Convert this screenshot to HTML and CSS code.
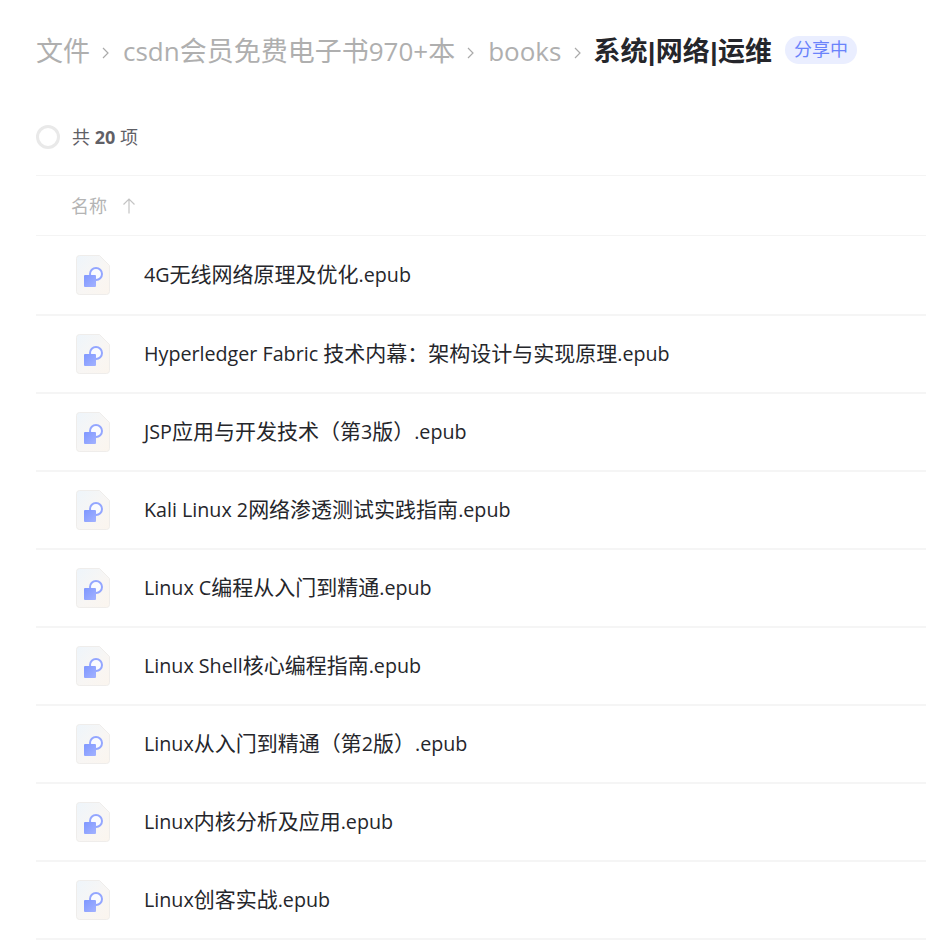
FILE: index.html
```html
<!DOCTYPE html>
<html lang="zh-CN">
<head>
<meta charset="utf-8">
<title>系统|网络|运维</title>
<link rel="stylesheet" href="styles.css">
</head>
<body>
<svg class="defs" width="0" height="0" aria-hidden="true">
  <defs>
    <linearGradient id="pg" x1="0" y1="0" x2="1" y2="1">
      <stop offset="0" stop-color="#eef5fb"/>
      <stop offset="0.55" stop-color="#f8f6f4"/>
      <stop offset="1" stop-color="#fbf5ee"/>
    </linearGradient>
    <linearGradient id="bg" x1="0" y1="0" x2="1" y2="1">
      <stop offset="0" stop-color="#7f97ff"/>
      <stop offset="1" stop-color="#a3b2ff"/>
    </linearGradient>
    <symbol id="epub" viewBox="0 0 34 40">
      <path d="M.5 3.500A3 3 0 0 1 3.500 .5H23.500L33.500 10.500V36.500A3 3 0 0 1 30.500 39.500H3.500A3 3 0 0 1 .5 36.500Z" fill="url(#pg)" stroke="#efedeb" stroke-width="1"/>
      <circle cx="20" cy="19" r="6" fill="#fafbff" stroke="#93a6ff" stroke-width="2"/>
      <rect x="8" y="20" width="12" height="12" rx="1" fill="url(#bg)"/>
    </symbol>
  </defs>
</svg>
<main class="page">
  <nav class="crumbs">
    <span class="crumb"><span class="zh">文件</span></span>
    <svg class="sep" viewBox="0 0 8 12"><path d="M1 1 6 6 1 11" /></svg>
    <span class="crumb">csdn<span class="zh">会员免费电子书</span>970+<span class="zh">本</span></span>
    <svg class="sep" viewBox="0 0 8 12"><path d="M1 1 6 6 1 11" /></svg>
    <span class="crumb">books</span>
    <svg class="sep sep-last" viewBox="0 0 8 12"><path d="M1 1 6 6 1 11" /></svg>
    <strong class="current"><span class="zh">系统</span><span class="pipe">|</span><span class="zh">网络</span><span class="pipe">|</span><span class="zh">运维</span></strong>
    <span class="badge">分享中</span>
  </nav>
  <div class="summary">
    <span class="check"></span>
    <span class="count">共 <b>20</b> 项</span>
  </div>
  <div class="head">
    <span class="head-label">名称</span>
    <svg class="arrow" viewBox="0 0 14 16"><path d="M7 15.500V1M1.500 6.500 7 1 12.500 6.500"/></svg>
  </div>
  <ul class="list">
    <li class="row"><svg class="icon"><use href="#epub"/></svg><span class="name">4G<span class="zh">无线网络原理及优化</span>.epub</span></li>
    <li class="row"><svg class="icon"><use href="#epub"/></svg><span class="name">Hyperledger Fabric <span class="zh">技术内幕：架构设计与实现原理</span>.epub</span></li>
    <li class="row"><svg class="icon"><use href="#epub"/></svg><span class="name">JSP<span class="zh">应用与开发技术（第</span>3<span class="zh">版）</span>.epub</span></li>
    <li class="row"><svg class="icon"><use href="#epub"/></svg><span class="name">Kali Linux 2<span class="zh">网络渗透测试实践指南</span>.epub</span></li>
    <li class="row"><svg class="icon"><use href="#epub"/></svg><span class="name">Linux C<span class="zh">编程从入门到精通</span>.epub</span></li>
    <li class="row"><svg class="icon"><use href="#epub"/></svg><span class="name">Linux Shell<span class="zh">核心编程指南</span>.epub</span></li>
    <li class="row"><svg class="icon"><use href="#epub"/></svg><span class="name">Linux<span class="zh">从入门到精通（第</span>2<span class="zh">版）</span>.epub</span></li>
    <li class="row"><svg class="icon"><use href="#epub"/></svg><span class="name">Linux<span class="zh">内核分析及应用</span>.epub</span></li>
    <li class="row"><svg class="icon"><use href="#epub"/></svg><span class="name">Linux<span class="zh">创客实战</span>.epub</span></li>
  </ul>
</main>
</body>
</html>
```
FILE: styles.css
```css
* { box-sizing: border-box; }
html, body { margin: 0; height: 944px; overflow: hidden; background: #fff; }
body { font-family: "Open Sans", "Noto Sans CJK SC", sans-serif; color: #25262b; }
.defs { position: absolute; }
.page { padding-left: 36px; }
.crumbs { display: flex; align-items: center; height: 104px; padding-bottom: 4px; font-size: 26px; color: #afafaf; }
.crumb { line-height: 32px; margin-top: 2px; }
.crumbs .zh { font-size: 27px; }
.sep { width: 8px; height: 12px; margin: 6px 13px 0 12px; flex: none; fill: none; stroke: #aaa; stroke-width: 1.200; }
.sep-last { margin-left: 13px; margin-right: 11px; }
.current { font-size: 26px; font-weight: 700; color: #25262b; line-height: 32px; margin-top: 2px; }
.pipe { font-family: "Liberation Sans", sans-serif; font-size: 26px; line-height: 1; margin: 0 0.5px; }
.badge { margin-left: 13px; width: 72px; height: 28px; border-radius: 14px; background: #eaeeff; color: #6a83fb; font-size: 18px; line-height: 27px; text-align: center; }
.summary { display: flex; align-items: center; height: 72px; padding-bottom: 6px; border-bottom: 1px solid #f4f4f4; }
.check { width: 24px; height: 24px; border-radius: 50%; border: 3px solid #e9e9e9; }
.count { margin-left: 12px; margin-bottom: 2px; font-size: 18px; color: #5f6066; }
.count b { font-weight: 700; }
.head { display: flex; align-items: center; height: 60px; padding-left: 35px; border-bottom: 1px solid #f4f4f4; font-size: 18px; color: #b4b4b4; }
.head-label { margin-bottom: 1px; }
.arrow { width: 14px; height: 16px; margin-left: 15px; fill: none; stroke: #c4c4c4; stroke-width: 1.200; }
.list { list-style: none; margin: 0; padding: 0; }
.row { display: flex; align-items: center; height: 78px; border-bottom: 2px solid #f5f5f5; font-size: 19.7px; color: #25262b; }
.row:first-child { height: 80px; }
.name { margin-bottom: 4px; white-space: nowrap; }
.row .zh { font-size: 21px; }
.icon { width: 34px; height: 40px; margin-left: 40px; margin-right: 34px; flex: none; }
```
